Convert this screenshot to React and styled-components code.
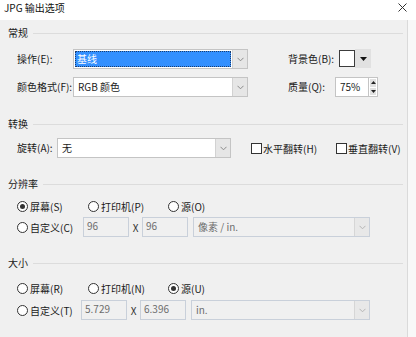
import React from "react";
import styled, { createGlobalStyle } from "styled-components";

const GlobalStyle = createGlobalStyle`
  html, body { margin: 0; padding: 0; }
  body {
    font-family: "Noto Sans CJK SC", "Noto Sans", sans-serif;
    font-size: 10px;
    color: #1a1a1a;
  }
`;

const Window = styled.div`
  width: 416px;
  height: 337px;
  display: flex;
  flex-direction: column;
  background: #ffffff;
  overflow: hidden;
`;

const TitleBar = styled.div`
  height: 20px;
  flex: none;
  display: flex;
  justify-content: space-between;
  align-items: flex-start;
  padding: 0 9px 0 4px;
  box-sizing: border-box;
  line-height: 15px;
  font-size: 10px;
  color: #111;
  background: #fff;
`;

const CloseBtn = styled.div`
  width: 9px;
  height: 9px;
  margin-top: 3px;
  display: flex;
`;

const Body = styled.div`
  flex: 1;
  display: flex;
`;

const Panel = styled.div`
  width: 408px;
  box-sizing: border-box;
  background: #f0f0f0;
  border-right: 1px solid #dadada;
  padding: 6px 0 0 8px;
  display: flex;
  flex-direction: column;
`;

const Edge = styled.div`
  flex: 1;
  background: #f8f8f8;
`;

const SectionHeader = styled.div`
  height: 14px;
  display: flex;
  align-items: center;
  gap: 5px;
  margin-top: ${(p) => p.$top || 0}px;
  line-height: 14px;
`;

const Rule = styled.div`
  flex: 1;
  height: 1px;
  background: #dcdcdc;
  margin-right: 4px;
`;

const Row = styled.div`
  height: 20px;
  display: flex;
  align-items: center;
  padding-left: 9px;
  margin-top: ${(p) => p.$top || 0}px;
  white-space: nowrap;
`;

const Label = styled.div`
  width: ${(p) => p.$w}px;
  margin-left: ${(p) => p.$ml || 0}px;
  flex: none;
  line-height: 20px;
`;

const Combo = styled.div`
  width: ${(p) => p.$w}px;
  height: 20px;
  box-sizing: border-box;
  flex: none;
  display: flex;
  border: 1px solid ${(p) => (p.$disabled ? "#c9d0da" : "#c4c4c4")};
  background: ${(p) => (p.$disabled ? "#f0f0f0" : "#ffffff")};
  margin-left: ${(p) => p.$ml || 0}px;
`;

const ComboText = styled.div`
  flex: 1;
  display: flex;
  align-items: center;
  padding-left: 4px;
  color: ${(p) => (p.$disabled ? "#6d6d6d" : "#1a1a1a")};
  line-height: 18px;
`;

const Highlight = styled.div`
  flex: 1;
  align-self: stretch;
  margin: 1px 1px 1px -3px;
  padding-left: 2px;
  background: #3390ff;
  color: #fff;
  outline: 1px dotted #1b3d6e;
  outline-offset: -1px;
  line-height: 16px;
`;

const ComboButton = styled.div`
  width: 14px;
  flex: none;
  display: flex;
  align-items: center;
  justify-content: center;
  background: ${(p) => (p.$disabled ? "#e8e8e8" : "#e6e6e6")};
  border-left: 1px solid ${(p) => (p.$disabled ? "#d6d6d6" : "#d2d2d2")};
`;

const Chevron = ({ color = "#8a8a8a" }) => (
  <svg width="7" height="5" viewBox="0 0 7 5">
    <polyline points="0.5,0.8 3.5,3.8 6.5,0.8" fill="none" stroke={color} strokeWidth="1" />
  </svg>
);

const ColorPicker = styled.div`
  display: flex;
  height: 20px;
  flex: none;
`;

const Swatch = styled.div`
  width: 16px;
  height: 17px;
  box-sizing: border-box;
  border: 1px solid #3c3c3c;
  background: #fff;
  margin-top: 1px;
`;

const SwatchButton = styled.div`
  width: 16px;
  height: 19px;
  background: #e1e1e1;
  display: flex;
  align-items: center;
  justify-content: center;
`;

const Spinner = styled.div`
  display: flex;
  height: 20px;
  flex: none;
`;

const SpinInput = styled.div`
  width: 33px;
  height: 20px;
  box-sizing: border-box;
  border: 1px solid #c4c4c4;
  border-right: none;
  background: #fff;
  padding-left: 4px;
  line-height: 18px;
`;

const SpinButtons = styled.div`
  width: 10px;
  display: flex;
  flex-direction: column;
  border: 1px solid #c4c4c4;
  box-sizing: border-box;
  background: #fff;
  padding: 1px;
  gap: 1px;
`;

const SpinHalf = styled.div`
  flex: 1;
  background: #e1e1e1;
  display: flex;
  align-items: center;
  justify-content: center;
`;

const CheckItem = styled.label`
  width: ${(p) => p.$w}px;
  margin-left: ${(p) => p.$ml || 0}px;
  display: flex;
  align-items: center;
  gap: 1px;
  flex: none;
`;

const CheckBox = styled.span`
  width: 11px;
  height: 11px;
  box-sizing: border-box;
  border: 1px solid #333;
  background: #fff;
  flex: none;
`;

const RadioItem = styled.label`
  width: ${(p) => p.$w}px;
  display: flex;
  align-items: center;
  gap: 2px;
  flex: none;
`;

const RadioCircle = styled.span`
  width: 11px;
  height: 11px;
  box-sizing: border-box;
  border: 1px solid #333;
  border-radius: 50%;
  background: #fff;
  display: flex;
  align-items: center;
  justify-content: center;
  flex: none;
  &::after {
    content: "";
    width: 5px;
    height: 5px;
    border-radius: 50%;
    background: ${(p) => (p.$checked ? "#333" : "transparent")};
  }
`;

const NumBox = styled.div`
  width: 46px;
  height: 20px;
  box-sizing: border-box;
  flex: none;
  border: 1px solid #c9d0da;
  background: #f0f0f0;
  color: #6d6d6d;
  padding-left: 3px;
  line-height: 16px;
`;

const Times = styled.div`
  width: 13px;
  text-align: center;
  flex: none;
  color: #333;
`;

const Radio = ({ w, checked, children }) => (
  <RadioItem $w={w}>
    <RadioCircle $checked={checked} />
    <span>{children}</span>
  </RadioItem>
);

export default function App() {
  return (
    <>
      <GlobalStyle />
      <Window>
        <TitleBar>
          <span>JPG 输出选项</span>
          <CloseBtn>
            <svg width="9" height="9" viewBox="0 0 9 9">
              <path d="M0.5 0.5 L8.5 8.5 M8.5 0.5 L0.5 8.5" stroke="#333" strokeWidth="1" />
            </svg>
          </CloseBtn>
        </TitleBar>
        <Body>
          <Panel>
            <SectionHeader>
              <span>常规</span>
              <Rule />
            </SectionHeader>
            <Row $top={9}>
              <Label $w={56}>操作(E):</Label>
              <Combo $w={175}>
                <ComboText>
                  <Highlight>基线</Highlight>
                </ComboText>
                <ComboButton>
                  <Chevron />
                </ComboButton>
              </Combo>
              <Label $w={51} $ml={40}>背景色(B):</Label>
              <ColorPicker>
                <Swatch />
                <SwatchButton>
                  <svg width="7" height="4" viewBox="0 0 7 4">
                    <polygon points="0,0 7,0 3.5,4" fill="#111" />
                  </svg>
                </SwatchButton>
              </ColorPicker>
            </Row>
            <Row $top={8}>
              <Label $w={56}>颜色格式(F):</Label>
              <Combo $w={175}>
                <ComboText>RGB 颜色</ComboText>
                <ComboButton>
                  <Chevron />
                </ComboButton>
              </Combo>
              <Label $w={47} $ml={40}>质量(Q):</Label>
              <Spinner>
                <SpinInput>75%</SpinInput>
                <SpinButtons>
                  <SpinHalf>
                    <svg width="5" height="3" viewBox="0 0 5 3">
                      <polygon points="0,3 5,3 2.5,0" fill="#222" />
                    </svg>
                  </SpinHalf>
                  <SpinHalf>
                    <svg width="5" height="3" viewBox="0 0 5 3">
                      <polygon points="0,0 5,0 2.5,3" fill="#222" />
                    </svg>
                  </SpinHalf>
                </SpinButtons>
              </Spinner>
            </Row>

            <SectionHeader $top={20}>
              <span>转换</span>
              <Rule />
            </SectionHeader>
            <Row $top={7}>
              <Label $w={40}>旋转(A):</Label>
              <Combo $w={174}>
                <ComboText>无</ComboText>
                <ComboButton>
                  <Chevron />
                </ComboButton>
              </Combo>
              <CheckItem $w={85} $ml={20}>
                <CheckBox />
                <span>水平翻转(H)</span>
              </CheckItem>
              <CheckItem $w={66}>
                <CheckBox />
                <span>垂直翻转(V)</span>
              </CheckItem>
            </Row>

            <SectionHeader $top={19}>
              <span>分辨率</span>
              <Rule />
            </SectionHeader>
            <Row $top={5}>
              <Radio w={71} checked>屏幕(S)</Radio>
              <Radio w={80}>打印机(P)</Radio>
              <Radio w={50}>源(O)</Radio>
            </Row>
            <Row $top={1}>
              <Radio w={66}>自定义(C)</Radio>
              <NumBox>96</NumBox>
              <Times>X</Times>
              <NumBox>96</NumBox>
              <Combo $w={177} $ml={5} $disabled>
                <ComboText $disabled>像素 / in.</ComboText>
                <ComboButton $disabled>
                  <Chevron color="#b5b5b5" />
                </ComboButton>
              </Combo>
            </Row>

            <SectionHeader $top={19}>
              <span>大小</span>
              <Rule />
            </SectionHeader>
            <Row $top={8}>
              <Radio w={71}>屏幕(R)</Radio>
              <Radio w={80}>打印机(N)</Radio>
              <Radio w={50} checked>源(U)</Radio>
            </Row>
            <Row $top={2}>
              <Radio w={64}>自定义(T)</Radio>
              <NumBox>5.729</NumBox>
              <Times>X</Times>
              <NumBox>6.396</NumBox>
              <Combo $w={179} $ml={5} $disabled>
                <ComboText $disabled>in.</ComboText>
                <ComboButton $disabled>
                  <Chevron color="#b5b5b5" />
                </ComboButton>
              </Combo>
            </Row>
          </Panel>
          <Edge />
        </Body>
      </Window>
    </>
  );
}
